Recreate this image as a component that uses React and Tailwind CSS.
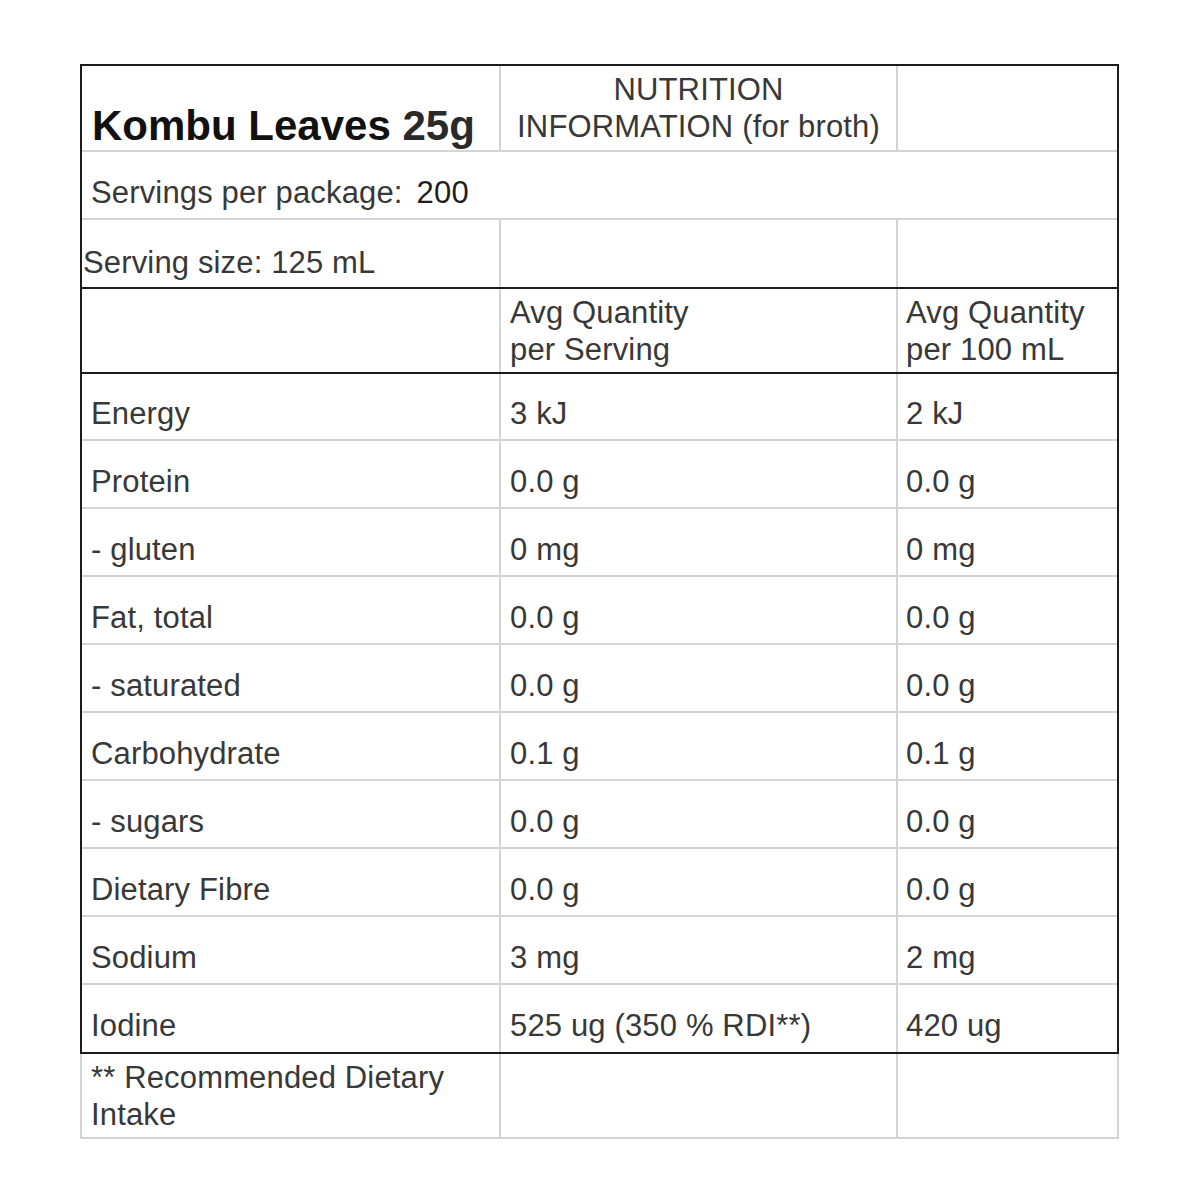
import React from "react";

const rows = [
  ["Energy", "3 kJ", "2 kJ"],
  ["Protein", "0.0 g", "0.0 g"],
  ["- gluten", "0 mg", "0 mg"],
  ["Fat, total", "0.0 g", "0.0 g"],
  ["- saturated", "0.0 g", "0.0 g"],
  ["Carbohydrate", "0.1 g", "0.1 g"],
  ["- sugars", "0.0 g", "0.0 g"],
  ["Dietary Fibre", "0.0 g", "0.0 g"],
  ["Sodium", "3 mg", "2 mg"],
  ["Iodine", "525 ug (350 % RDI**)", "420 ug"],
];

export default function App() {
  return (
    <div
      className="w-[1200px] h-[1200px] bg-white pt-[64px] pl-[80px] text-[#383838] text-[31px] tracking-[0.15px]"
      style={{ fontFamily: '"Liberation Sans", Arial, sans-serif' }}
    >
      <div className="w-[1039px] border-2 border-[#1c1c1c]">
        {/* Title row */}
        <div className="flex h-[86px] border-b-2 border-[#d4d4d4]">
          <div className="w-[417px] flex items-end pb-[3px] pl-[10px]">
            <span className="text-[42px] font-bold text-[#111] leading-none whitespace-nowrap tracking-normal">
              Kombu Leaves <span className="text-[#2a2a2a]">25g</span>
            </span>
          </div>
          <div className="w-[397px] border-l-2 border-[#d4d4d4] flex items-center justify-center text-center leading-[37px]">
            <div>
              NUTRITION
              <br />
              INFORMATION (for broth)
            </div>
          </div>
          <div className="flex-1 border-l-2 border-[#d4d4d4]"></div>
        </div>
        {/* Servings per package */}
        <div className="flex h-[68px] border-b-2 border-[#d4d4d4] items-center pt-[17px] pl-[9px]">
          Servings per package: <span className="ml-[14px] text-[#1e1e1e]">200</span>
        </div>
        {/* Serving size */}
        <div className="flex h-[69px] border-b-2 border-[#1c1c1c]">
          <div className="w-[417px] flex items-center pt-[20px] pl-[1px] whitespace-nowrap">
            Serving size: 125 mL
          </div>
          <div className="w-[397px] border-l-2 border-[#d4d4d4]"></div>
          <div className="flex-1 border-l-2 border-[#d4d4d4]"></div>
        </div>
        {/* Avg header */}
        <div className="flex h-[85px] border-b-2 border-[#1c1c1c] leading-[37px]">
          <div className="w-[417px]"></div>
          <div className="w-[397px] border-l-2 border-[#d4d4d4] flex items-center pl-[9px]">
            <div>
              Avg Quantity
              <br />
              per Serving
            </div>
          </div>
          <div className="flex-1 border-l-2 border-[#d4d4d4] flex items-center pl-[8px]">
            <div>
              Avg Quantity
              <br />
              per 100 mL
            </div>
          </div>
        </div>
        {/* Nutrient rows */}
        {rows.map((r, i) => {
          const last = i === rows.length - 1;
          const h = i === 0 ? "h-[67px]" : last ? "h-[67px]" : "h-[68px]";
          return (
            <div
              key={r[0]}
              className={`flex ${h} ${last ? "" : "border-b-2 border-[#d4d4d4]"}`}
            >
              <div className="w-[417px] flex items-center pt-[16px] pl-[9px] whitespace-nowrap">
                {r[0]}
              </div>
              <div className="w-[397px] border-l-2 border-[#d4d4d4] flex items-center pt-[16px] pl-[9px] whitespace-nowrap">
                {r[1]}
              </div>
              <div className="flex-1 border-l-2 border-[#d4d4d4] flex items-center pt-[16px] pl-[8px] whitespace-nowrap">
                {r[2]}
              </div>
            </div>
          );
        })}
      </div>
      {/* Footnote */}
      <div className="w-[1039px] h-[85px] flex border-2 border-t-0 border-[#d4d4d4]">
        <div className="w-[417px] flex items-center pl-[9px] leading-[37px]">
          <div>
            ** Recommended Dietary
            <br />
            Intake
          </div>
        </div>
        <div className="w-[397px] border-l-2 border-[#d4d4d4]"></div>
        <div className="flex-1 border-l-2 border-[#d4d4d4]"></div>
      </div>
    </div>
  );
}
